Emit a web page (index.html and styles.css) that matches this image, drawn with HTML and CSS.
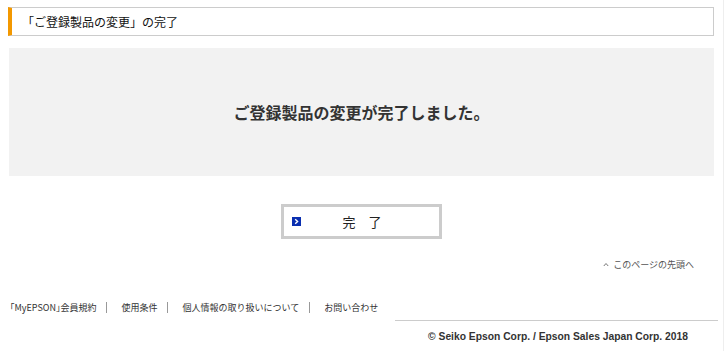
FILE: index.html
```html
<!DOCTYPE html>
<html lang="ja">
<head>
  <meta charset="UTF-8" />
  <title>「ご登録製品の変更」の完了</title>
  <link rel="stylesheet" href="styles.css">
</head>
<body>
  <div class="page">
    <h1 class="heading">「ご登録製品の変更」の完了</h1>

    <div class="message">ご登録製品の変更が完了しました。</div>

    <div class="actions">
      <a class="btn" href="#">
        <span class="btn-icon">
          <svg width="9" height="9" viewBox="0 0 9 9"><rect width="9" height="9" fill="#0a2fb0"/><path d="M3.2 2.3 L5.6 4.5 L3.2 6.7" stroke="#fff" stroke-width="1.4" fill="none"/></svg>
        </span>
        <span class="btn-label">完　了</span>
      </a>
    </div>

    <div class="pagetop">
      <a href="#">
        <svg width="6" height="5" viewBox="0 0 6 5"><path d="M0.8 4 L3 1.5 L5.2 4" stroke="#777" stroke-width="1" fill="none"/></svg>
        このページの先頭へ
      </a>
    </div>

    <ul class="footer-links">
      <li><a href="#">｢MyEPSON｣会員規約</a></li>
      <li><a href="#">使用条件</a></li>
      <li><a href="#">個人情報の取り扱いについて</a></li>
      <li><a href="#">お問い合わせ</a></li>
    </ul>
  </div>

  <div class="copyright">© Seiko Epson Corp. / Epson Sales Japan Corp. 2018</div>
</body>
</html>
```

FILE: styles.css
```css
body {
  margin: 0;
  font-family: "Noto Sans CJK JP", "Liberation Sans", sans-serif;
  color: #333;
  background: #fff;
  border-right: 1px solid #eee;
  width: 723px;
  min-height: 351px;
}

a {
  color: inherit;
  text-decoration: none;
}

.page {
  padding: 7px 9px 0 8px;
}

.heading {
  margin: 0;
  height: 27px;
  line-height: 27px;
  border: 1px solid #ccc;
  border-left: 4px solid #f39800;
  padding-left: 10px;
  font-size: 12px;
  font-weight: normal;
  color: #111;
}

.message {
  margin: 12px 0 0 1px;
  height: 128px;
  background: #f2f2f2;
  display: flex;
  align-items: center;
  justify-content: center;
  font-size: 16px;
  font-weight: bold;
  color: #333;
}

.actions {
  display: flex;
  justify-content: center;
  margin-top: 28px;
}

.btn {
  display: flex;
  align-items: center;
  width: 155px;
  height: 29px;
  border: 3px solid #ccc;
  font-size: 13px;
  color: #222;
}

.btn-icon {
  display: flex;
  margin-left: 8px;
}

.btn-label {
  margin-left: 42px;
}

.pagetop {
  text-align: right;
  margin-top: 19px;
  padding-right: 20px;
  font-size: 9px;
  color: #555;
}

.pagetop svg {
  margin-right: 2px;
  vertical-align: 1px;
}

.footer-links {
  list-style: none;
  margin: 31px 0 0;
  padding: 0 0 0 2px;
  display: flex;
  font-size: 9px;
  color: #333;
}

.footer-links li {
  padding: 0 10px 0 14px;
  border-left: 1px solid #999;
  line-height: 11px;
}

.footer-links li:first-child {
  border-left: none;
  padding-left: 0;
}

.copyright {
  margin: 7px 5px 0 395px;
  border-top: 1px solid #ccc;
  padding: 10px 30px 0 0;
  text-align: right;
  font-family: "Liberation Sans", Arial, sans-serif;
  font-size: 10.3px;
  font-weight: bold;
  color: #333;
}
```
